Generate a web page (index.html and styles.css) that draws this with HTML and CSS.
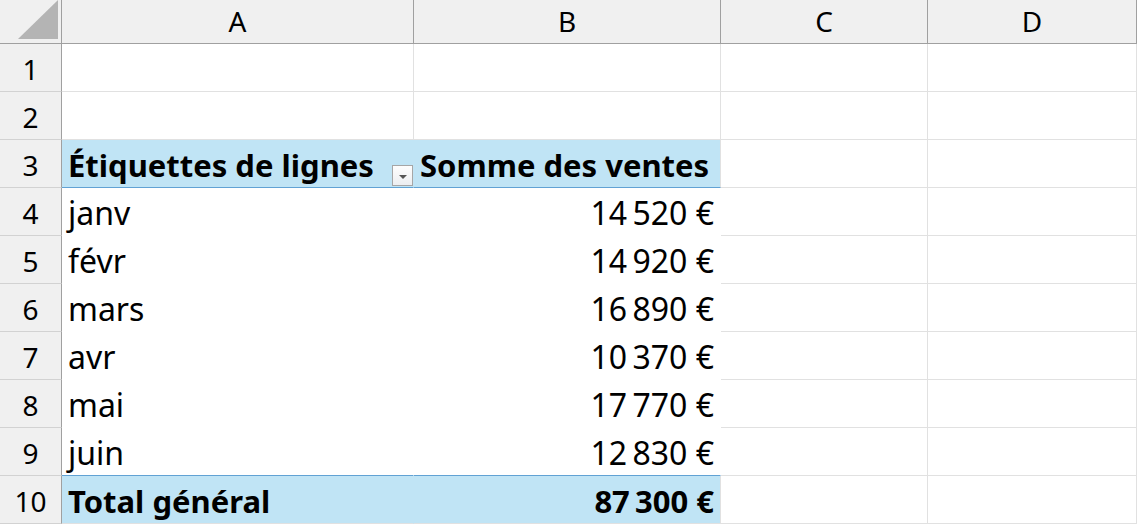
FILE: index.html
```html
<!DOCTYPE html>
<html lang="fr">
<head>
  <meta charset="UTF-8" />
  <title>Tableau croisé dynamique</title>
  <link rel="stylesheet" href="styles.css">
</head>
<body>

  <div class="sheet">
    <!-- column headers -->
    <div class="corner"><span class="tri"></span></div>
    <div class="colhead">A</div>
    <div class="colhead">B</div>
    <div class="colhead">C</div>
    <div class="colhead">D</div>

    <div class="rowhead">1</div>
    <div class="cell"></div><div class="cell"></div><div class="cell"></div><div class="cell"></div>

    <div class="rowhead">2</div>
    <div class="cell"></div><div class="cell"></div><div class="cell"></div><div class="cell"></div>

    <div class="rowhead">3</div>
    <div class="cell pv-head pv-a">Étiquettes de lignes <span class="filter"><span class="arrow"></span></span></div>
    <div class="cell pv-head pv-b">Somme des ventes</div>
    <div class="cell"></div><div class="cell"></div>

    <div class="rowhead">4</div>
    <div class="cell pv pv-a">janv</div>
    <div class="cell pv num">14&#8239;520&nbsp;€</div>
    <div class="cell"></div><div class="cell"></div>

    <div class="rowhead">5</div>
    <div class="cell pv pv-a">févr</div>
    <div class="cell pv num">14&#8239;920&nbsp;€</div>
    <div class="cell"></div><div class="cell"></div>

    <div class="rowhead">6</div>
    <div class="cell pv pv-a">mars</div>
    <div class="cell pv num">16&#8239;890&nbsp;€</div>
    <div class="cell"></div><div class="cell"></div>

    <div class="rowhead">7</div>
    <div class="cell pv pv-a">avr</div>
    <div class="cell pv num">10&#8239;370&nbsp;€</div>
    <div class="cell"></div><div class="cell"></div>

    <div class="rowhead">8</div>
    <div class="cell pv pv-a">mai</div>
    <div class="cell pv num">17&#8239;770&nbsp;€</div>
    <div class="cell"></div><div class="cell"></div>

    <div class="rowhead">9</div>
    <div class="cell pv pv-a pv-last">juin</div>
    <div class="cell pv num pv-last">12&#8239;830&nbsp;€</div>
    <div class="cell"></div><div class="cell"></div>

    <div class="rowhead">10</div>
    <div class="cell pv-total pv-a">Total général</div>
    <div class="cell pv-total pv-b num">87&#8239;300&nbsp;€</div>
    <div class="cell"></div><div class="cell"></div>
  </div>

</body>
</html>
```

FILE: styles.css
```css
:root {
  --grid: #e1e1e1;
  --head-bg: #f0f0f0;
  --head-line: #a0a0a0;
  --pivot: #c0e4f5;
  --pivot-line: #61a2d4;
}

body {
  margin: 0;
  background: #ffffff;
  font-family: "Noto Sans", "Open Sans", sans-serif;
  color: #000;
  overflow: hidden;
}

.sheet {
  display: grid;
  grid-template-columns: 62px 352px 307px 207px 209px;
  grid-template-rows: 44px repeat(10, 48px);
}

.corner,
.colhead,
.rowhead {
  background: var(--head-bg);
  box-sizing: border-box;
}

.corner {
  position: relative;
  border-right: 1px solid var(--head-line);
  border-bottom: 1px solid var(--head-line);
}

.tri {
  position: absolute;
  right: 3px;
  bottom: 4px;
  width: 40px;
  height: 39px;
  background: #b4b4b4;
  clip-path: polygon(100% 0, 100% 100%, 0 100%);
}

.colhead {
  display: flex;
  align-items: center;
  justify-content: center;
  font-size: 28px;
  border-right: 1px solid var(--head-line);
  border-bottom: 1px solid var(--head-line);
  padding-bottom: 1px;
}

.rowhead {
  display: flex;
  align-items: center;
  justify-content: center;
  font-size: 28px;
  border-right: 1px solid var(--head-line);
  border-bottom: 1px solid #d2d2d2;
  padding-top: 2px;
}

.cell {
  box-sizing: border-box;
  border-right: 1px solid var(--grid);
  border-bottom: 1px solid var(--grid);
  display: flex;
  align-items: center;
  padding: 2px 6px 0;
  font-size: 32px;
  white-space: nowrap;
}

.num {
  justify-content: flex-end;
}

.pv {
  border-bottom-color: #fff;
  border-right-color: #fff;
}

.pv.pv-last {
  border-bottom-color: var(--pivot-line);
}

.pv-head,
.pv-total {
  background: var(--pivot);
  font-weight: bold;
  font-size: 31px;
  border-right-color: var(--pivot);
}

.pv-head {
  border-bottom-color: var(--pivot-line);
}

.pv-total {
  border-bottom-color: var(--grid);
}

.pv-b {
  border-right-color: var(--grid);
}

.pv-a {
  position: relative;
}

.filter {
  position: absolute;
  right: 0;
  bottom: 1px;
  width: 21px;
  height: 21px;
  box-sizing: border-box;
  border: 1px solid #a6a6a6;
  background: linear-gradient(#fdfdfd, #eceef1);
}

.arrow {
  position: absolute;
  left: 6px;
  top: 9px;
  border-left: 4px solid transparent;
  border-right: 4px solid transparent;
  border-top: 4px solid #555;
}
```
